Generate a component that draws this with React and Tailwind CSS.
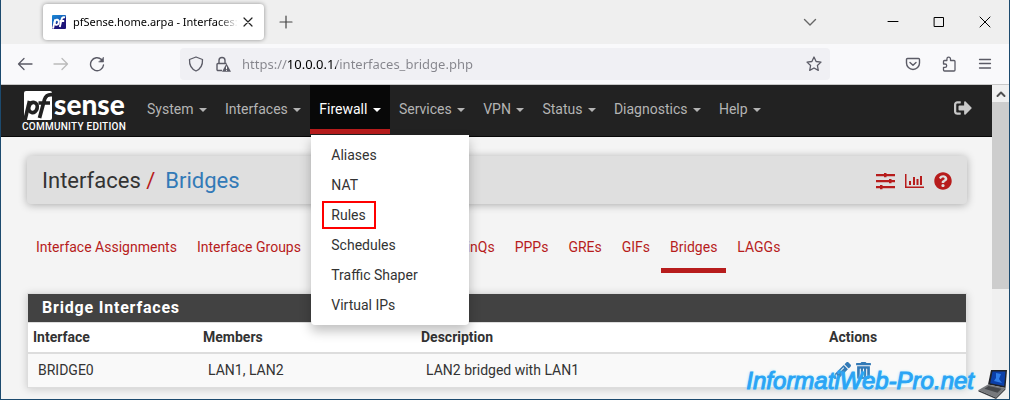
// src/App.jsx
import { FaPencilAlt, FaTrashAlt, FaSignOutAlt, FaQuestionCircle } from 'react-icons/fa';

const menus = ['System', 'Interfaces', 'Firewall', 'Services', 'VPN', 'Status', 'Diagnostics', 'Help'];

const firewallItems = ['Aliases', 'NAT', 'Rules', 'Schedules', 'Traffic Shaper', 'Virtual IPs'];

const tabs = [
  'Interface Assignments',
  'Interface Groups',
  'Wireless',
  'VLANs',
  'QinQs',
  'PPPs',
  'GREs',
  'GIFs',
  'Bridges',
  'LAGGs',
];

const bridges = [{ name: 'BRIDGE0', members: 'LAN1, LAN2', descr: 'LAN2 bridged with LAN1' }];

function Icon({ children, className = 'size-4', box = '0 0 16 16', width = 1.2 }) {
  return (
    <svg
      viewBox={box}
      className={className}
      fill="none"
      stroke="currentColor"
      strokeWidth={width}
      strokeLinecap="round"
      strokeLinejoin="round"
      aria-hidden="true"
    >
      {children}
    </svg>
  );
}

function TabStrip() {
  return (
    <div className="flex h-11 items-center bg-[#efefef] pl-[42px] pr-4">
      <div className="flex h-9 w-[221px] items-center rounded bg-white pl-[9px] pr-2 shadow-[0_0_4px_rgba(0,0,0,0.4)]">
        <svg viewBox="0 0 14 14" className="size-3.5 shrink-0" aria-hidden="true">
          <defs>
            <linearGradient id="fav" x1="0" y1="0" x2="0.6" y2="1">
              <stop offset="0" stopColor="#1a8ad8" />
              <stop offset="0.5" stopColor="#1660b8" />
              <stop offset="0.6" stopColor="#20177c" />
              <stop offset="1" stopColor="#1d1478" />
            </linearGradient>
          </defs>
          <rect width="14" height="14" rx="1" fill="url(#fav)" />
          <g fill="none" stroke="#fff" strokeWidth="1.9">
            <path d="M3.2 4.6 1 13.5" />
            <ellipse cx="4.7" cy="7.3" rx="2.1" ry="2.6" transform="rotate(14 4.7 7.3)" />
            <path d="M7.8 12 9.6 4.4C10 2.6 11 2 13 2.4M7.6 6h4.6" />
          </g>
        </svg>
        <span className="ml-[7px] whitespace-nowrap font-['Noto_Sans','Open_Sans',sans-serif] text-[11px] text-black [mask-image:linear-gradient(to_right,#000_88%,transparent)]">
          pfSense.home.arpa - Interfaces:
        </span>
        <button type="button" aria-label="Close tab" className="ml-auto text-[#222]">
          <Icon>
            <path d="m4 4 8 8M12 4l-8 8" />
          </Icon>
        </button>
      </div>
      <button type="button" aria-label="New tab" className="ml-3.5 text-[#444]">
        <Icon>
          <path d="M8 2v12M2 8h12" />
        </Icon>
      </button>
      <button type="button" aria-label="List all tabs" className="ml-auto text-[#666]">
        <Icon width={1.4}>
          <path d="m2.500 5.500 5.500 5.500 5.500-5.500" />
        </Icon>
      </button>
      <div className="ml-[67px] flex gap-[30px] text-black">
        <button type="button" aria-label="Minimize">
          <Icon width={1}>
            <path d="M3 7.500h10" />
          </Icon>
        </button>
        <button type="button" aria-label="Maximize">
          <Icon width={1}>
            <path d="M3.500 3.500h9v9h-9z" />
          </Icon>
        </button>
        <button type="button" aria-label="Close window">
          <Icon width={1}>
            <path d="m3 3 10 10M13 3 3 13" />
          </Icon>
        </button>
      </div>
    </div>
  );
}

function Toolbar() {
  return (
    <div className="flex h-[41px] items-center border-b border-[#c8c8c8] bg-[#f9f9fb] pl-4 pr-4 text-[#5b5b66]">
      <button type="button" aria-label="Back">
        <Icon width={1.3}>
          <path d="M15 8H1.500M7 2.500 1.500 8 7 13.500" />
        </Icon>
      </button>
      <button type="button" aria-label="Forward" className="ml-5 text-[#bbb]">
        <Icon width={1.3}>
          <path d="M1 8h13.500M9 2.500 14.500 8 9 13.500" />
        </Icon>
      </button>
      <button type="button" aria-label="Reload" className="ml-5">
        <Icon width={1.4}>
          <path d="M14.500 9A6.500 6.500 0 1 1 12.500 3.500" />
          <path d="M14.500 1.500v4.500H10z" fill="currentColor" strokeWidth="0.6" />
        </Icon>
      </button>
      <div className="ml-[75px] flex h-8 flex-1 items-center rounded bg-[#f0f0f4] pl-2 pr-2">
        <Icon width={1.3} className="size-4 shrink-0">
          <path d="M8 1 1.500 3.500c-.3 5.500 2 9.500 6.500 11.500 4.500-2 6.800-6 6.500-11.500z" />
        </Icon>
        <svg viewBox="0 0 16 16" className="ml-[11px] size-4 shrink-0" aria-hidden="true">
          <path
            d="M7 14.500H3a1 1 0 0 1-1-1v-5a1 1 0 0 1 1-1h8.500M4 7.500v-3a3 3 0 0 1 6 0v3"
            fill="none"
            stroke="currentColor"
            strokeWidth="1.400"
          />
          <path d="M11.500 7.500 16 15.800H7z" fill="currentColor" />
          <path d="M11.500 10.500v2.500M11.500 13.800v1" stroke="#fff" strokeWidth="1" />
        </svg>
        <input
          type="text"
          aria-label="Address"
          defaultValue="https://10.0.0.1/interfaces_bridge.php"
          className="ml-[11px] min-w-0 flex-1 bg-[linear-gradient(to_right,#85858c_46px,#000_46px,#000_94px,#85858c_94px)] bg-clip-text font-['Noto_Sans','Open_Sans',sans-serif] text-[13px] text-transparent outline-none"
        />
        <button type="button" aria-label="Bookmark this page">
          <Icon width={1.3}>
            <path d="m8 1 2.100 4.500 4.900.6-3.600 3.400.9 4.900L8 12l-4.300 2.400.9-4.900L1 6.100l4.900-.6z" />
          </Icon>
        </button>
      </div>
      <button type="button" aria-label="Save to Pocket" className="ml-[75px]">
        <Icon width={1.4}>
          <path d="M2.500 2.500h11a1 1 0 0 1 1 1V7a6.500 6.500 0 0 1-13 0V3.500a1 1 0 0 1 1-1z" />
          <path d="M5 6.500 8 9.300l3-2.800" />
        </Icon>
      </button>
      <button type="button" aria-label="Extensions" className="ml-5">
        <Icon width={1.3}>
          <path d="M3.500 15H13a1 1 0 0 0 1-1V5.500a1 1 0 0 0-1-1H9.500V3a1.800 1.800 0 0 0-3.600 0v1.500H3.500a1 1 0 0 0-1 1V8H4a1.700 1.700 0 0 1 0 3.400H2.500V14a1 1 0 0 0 1 1z" />
        </Icon>
      </button>
      <button type="button" aria-label="Open application menu" className="ml-5">
        <Icon width={1.3}>
          <path d="M2.500 3.500h11M2.500 7.500h11M2.500 12h11" />
        </Icon>
      </button>
    </div>
  );
}

function Logo() {
  return (
    <a href="#home" aria-label="pfSense Community Edition" className="block w-[118px] pl-[21px] pt-1.5 text-white">
      <svg viewBox="0 0 106 29" className="h-[29px] w-[106px] max-w-none overflow-visible" aria-hidden="true">
        <rect x="2" y="0" width="28" height="29" rx="2" fill="#fff" />
        <g fill="none" stroke="#222" strokeWidth="3.700">
          <path d="M7.500 10 3 29" />
          <ellipse cx="11" cy="16.500" rx="4.200" ry="5.200" transform="rotate(14 11 16.500)" />
          <path d="M17.500 27 22.500 8.500C23.800 4.500 26 3 31 3.700M16.500 12H28" />
        </g>
        <text x="32" y="24" fill="#fff" fontFamily="Lato" fontWeight="900" fontSize="28">
          sense
        </text>
      </svg>
      <span className="block whitespace-nowrap text-[10px] font-medium leading-[14px] tracking-wide">COMMUNITY EDITION</span>
    </a>
  );
}

function Navbar() {
  return (
    <nav className="flex h-[52px] border-b border-[#080808] bg-[#222]">
      <Logo />
      <ul className="ml-[19px] flex">
        {menus.map((menu) => {
          const open = menu === 'Firewall';
          return (
            <li key={menu} className="relative">
              <button
                type="button"
                aria-expanded={open}
                className={`block h-[49px] border-b-[5px] px-[9px] pt-1 ${
                  open ? 'border-[#b71c1c] bg-[#080808] text-white' : 'border-transparent text-[#b4b4b4]'
                }`}
              >
                {menu}{' '}
                <span className="ml-0.5 inline-block border-x-4 border-t-4 border-x-transparent align-middle" />
              </button>
              {open && <FirewallMenu />}
            </li>
          );
        })}
      </ul>
      <a href="#logout" aria-label="Logout" className="ml-auto mr-5 mt-3.5 text-[#c8c8c8]">
        <FaSignOutAlt className="size-[18px]" />
      </a>
    </nav>
  );
}

function FirewallMenu() {
  return (
    <ul className="absolute left-px top-[50px] z-10 w-[158px] rounded-b bg-white py-[5px] shadow-[0_6px_12px_rgba(0,0,0,0.25)]">
      {firewallItems.map((item) => (
        <li key={item} className="relative">
          <a href="#firewall" className="block px-5 leading-[30px] text-[#333]">
            {item}
          </a>
          {item === 'Rules' && <span className="absolute left-[11px] top-px h-7 w-[54px] border-2 border-[#f00]" />}
        </li>
      ))}
    </ul>
  );
}

function PageHeader() {
  return (
    <header className="flex h-12 items-center justify-between rounded bg-[#dfdfdf] px-[15px] pt-0.5 shadow-[0_1px_8px_rgba(0,0,0,0.3)]">
      <h1 className="text-[22px] text-[#333]">
        Interfaces <span className="text-[#b71c1c]">/</span>
        <a href="#bridges" className="ml-2.5 text-[#337ab7]">
          Bridges
        </a>
      </h1>
      <div className="flex items-center gap-2.5 text-[#b71c1c]">
        <a href="#settings" aria-label="Related settings">
          <svg viewBox="0 0 19 18" className="h-[18px] w-[19px]" fill="currentColor" aria-hidden="true">
            <path d="M0 2h19v2.200H0zM0 8h19v2.200H0zM0 14h19v2.200H0z" />
            <path d="M8 1h2.500v4.200H8zM13 7h2.500v4.200H13zM4 13h2.500v4.200H4z" />
          </svg>
        </a>
        <a href="#status" aria-label="Related status">
          <svg viewBox="0 0 19 18" className="h-[18px] w-[19px]" fill="currentColor" aria-hidden="true">
            <path d="M0 2h1.500v12.500H19V16H0zM4 9h2v4H4zM8 5h2v8H8zM11.500 7h2v6h-2zM15 4h2v9h-2z" />
          </svg>
        </a>
        <a href="#help" aria-label="Help">
          <FaQuestionCircle className="size-[18px]" />
        </a>
      </div>
    </header>
  );
}

function BridgeTable() {
  return (
    <section className="mt-5 border border-[#ddd] bg-white shadow-[0_1px_8px_rgba(0,0,0,0.18)]">
      <h2 className="bg-[#424242] px-3.5 text-base font-bold leading-7 tracking-wider text-white">Bridge Interfaces</h2>
      <table className="w-full table-fixed border-t border-[#ddd] text-left">
        <thead>
          <tr className="h-[30px] border-b-2 border-[#ddd]">
            <th className="w-[170px] px-[5px]">Interface</th>
            <th className="w-[218px] px-[5px]">Members</th>
            <th className="px-[5px]">Description</th>
            <th className="w-[142px] px-[5px]">Actions</th>
          </tr>
        </thead>
        <tbody>
          {bridges.map((bridge) => (
            <tr key={bridge.name} className="h-[34px] bg-[#f9f9f9]">
              <td className="px-2.5">{bridge.name}</td>
              <td className="px-2.5">{bridge.members}</td>
              <td className="px-2.5">{bridge.descr}</td>
              <td className="px-2.5">
                <div className="flex gap-1 text-[#337ab7]">
                  <a href="#edit" aria-label="Edit bridge">
                    <FaPencilAlt className="size-[17px]" />
                  </a>
                  <a href="#delete" aria-label="Delete bridge">
                    <FaTrashAlt className="size-[17px]" />
                  </a>
                </div>
              </td>
            </tr>
          ))}
        </tbody>
      </table>
    </section>
  );
}

function Scrollbar() {
  return (
    <div className="flex w-[17px] shrink-0 flex-col bg-[#f0f0f0]">
      <button type="button" aria-label="Scroll up" className="flex h-[17px] items-center justify-center text-[#505050]">
        <Icon className="size-3" box="0 0 12 12" width={2}>
          <path d="m2.500 8 3.500-3.500L9.500 8" />
        </Icon>
      </button>
      <div className="h-[187px] bg-[#cdcdcd]" />
    </div>
  );
}

function Watermark() {
  return (
    <div className="absolute bottom-0 right-px z-20 flex items-end gap-1">
      <span className="font-['Liberation_Sans',Arial,sans-serif] text-2xl italic leading-9 text-[#2aa5f5] [-webkit-text-stroke:1px_#2aa5f5] [text-shadow:0_0_3px_#7fe0ff]">
        InformatiWeb-Pro.net
      </span>
      <svg viewBox="0 0 30 30" className="size-[30px]" aria-hidden="true">
        <path d="m13 1 16 0-1.500 18L10 15.500z" fill="#202228" />
        <path d="m14.500 2.500 13 0-1.300 14.500-14-2.800z" fill="#0b3fa8" />
        <path d="m18 4 5 1-2 5 3 4-8-2 2-3z" fill="#2f7de8" />
        <path d="M10 15.500 27.500 19 18 28.500.500 21z" fill="#77797d" />
        <path d="m10.500 17 13 2.800-4 4-13-4z" fill="#45474b" />
        <path d="M.500 21 18 28.500 27.500 19v1.500L18 30 .500 22.500z" fill="#3b3d41" />
      </svg>
    </div>
  );
}

export default function App() {
  return (
    <div className="relative flex min-h-screen flex-col border-x border-b border-[#1c4a6e] bg-[#f4f4f4] font-[Roboto,sans-serif] text-sm text-[#333]">
      <TabStrip />
      <Toolbar />
      <div className="flex flex-1">
        <div className="min-w-0 flex-1">
          <Navbar />
          <main className="pl-[26px] pr-[25px] pt-[19px]">
            <PageHeader />
            <ul className="mt-[22px] flex">
              {tabs.map((tab) => (
                <li key={tab} className="mr-0.5">
                  <a
                    href="#tab"
                    className={`block whitespace-nowrap border-b-[5px] px-[9px] py-[11px] text-[#b71c1c] ${
                      tab === 'Bridges' ? 'border-[#b71c1c]' : 'border-transparent'
                    }`}
                  >
                    {tab}
                  </a>
                </li>
              ))}
            </ul>
            <BridgeTable />
          </main>
        </div>
        <Scrollbar />
      </div>
      <Watermark />
    </div>
  );
}
